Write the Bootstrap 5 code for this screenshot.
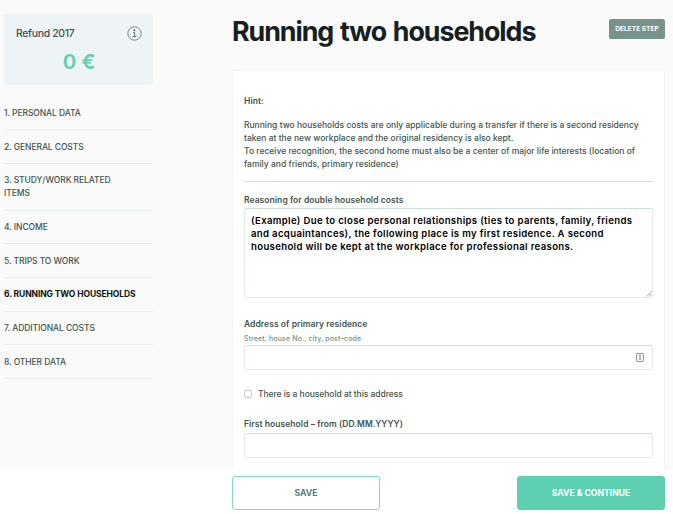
<!DOCTYPE html>
<html lang="en">
<head>
<meta charset="utf-8">
<meta name="viewport" content="width=device-width, initial-scale=1">
<title>Running two households</title>
<link href="https://cdn.jsdelivr.net/npm/bootstrap@5.3.0/dist/css/bootstrap.min.css" rel="stylesheet">
<style>
body{font-family:Inter,"Liberation Sans",sans-serif;font-size:8.5px;line-height:12.8px;color:#43544f;background:#fff;height:514px;overflow:hidden;font-weight:500}
.workspace{height:470px;background:#fafafa;overflow:hidden;padding:0 8px 0 4px}
.side{width:149px;padding-top:14px}
.refund{height:71px;background:#eef3f6;border-radius:3px;padding:12px 11px 0 12px}
.refund-title{font-size:10.4px;line-height:16px;letter-spacing:-.3px;color:#3f504b}
.amount{font-size:20.5px;line-height:24px;color:#5dd0b1;font-weight:600;padding-top:8px}
.steps{margin-top:11.8px}
.steps a{display:block;color:#43544f;text-decoration:none;font-size:8.5px;letter-spacing:-.08px;line-height:13px;padding:10.35px 30px 9.3px 0;border-bottom:1px solid #e6efed}
.steps a.current{color:#0c1513;font-weight:700;padding-right:0;letter-spacing:-.1px}
.main-col{width:433px}
.top-row{height:70px;padding-top:14px}
h1{font-size:26.8px;line-height:34px;font-weight:700;letter-spacing:-1.05px;word-spacing:1.5px;color:#17201e;margin:0}
.btn-delete{margin-top:5px;width:56px;height:20px;background:#76928b;color:#fff;font-size:6.6px;line-height:20px;font-weight:700;padding:0;border:0;border-radius:2px}
.panel{height:420px;background:#fff;border:1px solid #f0f4f4;padding:23.5px 11px 0 11px;border-radius:2px}
.hint-text{margin-top:12px;white-space:nowrap}
.rule{height:1px;background:#cfe3dc;margin:11px 0 11.5px}
.fl{display:block;font-weight:600;letter-spacing:.06px}
.form-control{border:1px solid #dfebe8;border-top-color:#cddfda;border-radius:3px;padding:0;font-size:8.5px}
.reason{height:90px;margin-top:1.5px;padding:6px 6px;font-size:9.6px;letter-spacing:.33px;line-height:12.8px;color:#000;font-weight:600;resize:none;white-space:pre;overflow:hidden}
.line-input{height:25px}
.addr-label{margin-top:20px}
.sub{font-size:7px;line-height:10px;color:#76928b;letter-spacing:.13px;padding-top:3px;height:13.6px}
.check-row{height:13px;margin-top:18px;gap:6px}
.from-label{margin-top:17px}
.from-input{margin-top:3px}
.check{width:8px;height:8px;border:1px solid #c3c9c7;border-radius:1.5px;margin:0;float:none}
.check-row label{letter-spacing:-.05px}
.grip{position:absolute;right:1px;bottom:1px}
.key{position:absolute;right:9px;top:8px}
.bottom-bar{height:44px;padding:6px 8px 4px 232px}
.btn-act{width:148px;height:34px;border-radius:3px;padding:0;font-size:8.6px;font-weight:700;line-height:32px}
.btn-save{border:1px solid #80dcc3;color:#4a7f72;background:#fff}
.btn-next{border:1px solid #5dd0b1;background:#5dd0b1;color:#fff}
</style>
<script src="https://cdn.jsdelivr.net/npm/bootstrap@5.3.0/dist/js/bootstrap.bundle.min.js" defer></script>
</head>
<body>
<div class="workspace d-flex justify-content-between">
  <aside class="side flex-shrink-0">
    <div class="refund">
      <div class="d-flex justify-content-between">
        <span class="refund-title">Refund 2017</span>
        <svg width="15" height="15" viewBox="0 0 15 15" fill="none" stroke="#61736d"><circle cx="7.5" cy="7.5" r="6.7" stroke-width=".8"/><path d="M6 6.3h1.6v4M5.8 10.5h3.6" stroke-width="1"/><circle cx="7.4" cy="4.2" r=".9" fill="#43544f" stroke="none"/></svg>
      </div>
      <div class="amount text-center">0 €</div>
    </div>
    <nav class="steps">
      <a href="#">1. PERSONAL DATA</a>
      <a href="#">2. GENERAL COSTS</a>
      <a href="#">3. STUDY/WORK RELATED ITEMS</a>
      <a href="#">4. INCOME</a>
      <a href="#">5. TRIPS TO WORK</a>
      <a href="#" class="current">6. RUNNING TWO HOUSEHOLDS</a>
      <a href="#">7. ADDITIONAL COSTS</a>
      <a href="#">8. OTHER DATA</a>
    </nav>
  </aside>
  <main class="main-col flex-shrink-0">
    <div class="top-row d-flex justify-content-between align-items-start">
      <h1>Running two households</h1>
      <button class="btn btn-delete">DELETE STEP</button>
    </div>
    <div class="panel">
      <div class="fl">Hint:</div>
      <div class="hint-text">Running two households costs are only applicable during a transfer if there is a second residency<br>taken at the new workplace and the original residency is also kept.<br>To receive recognition, the second home must also be a center of major life interests (location of<br>family and friends, primary residence)</div>
      <div class="rule"></div>
      <label class="fl" for="reason">Reasoning for double household costs</label>
      <div class="position-relative">
        <textarea id="reason" class="form-control reason">(Example) Due to close personal relationships (ties to parents, family, friends
and acquaintances), the following place is my first residence. A second
household will be kept at the workplace for professional reasons.</textarea>
        <svg class="grip" width="6" height="6" viewBox="0 0 6 6" stroke="#999" stroke-width=".7"><path d="M.5 5.5l5-5M3 5.5L5.5 3"/></svg>
      </div>
      <label class="fl addr-label" for="addr">Address of primary residence</label>
      <div class="sub">Street, house No., city, post–code</div>
      <div class="position-relative">
        <input id="addr" class="form-control line-input">
        <svg class="key" width="8" height="9" viewBox="0 0 8 9" fill="none" stroke="#8b8f8e"><rect x=".6" y=".6" width="6.8" height="7.8" rx=".6"/><path d="M4 2.4v4.2M3 2.6h2M3 6.4h2" stroke-width=".9"/></svg>
      </div>
      <div class="d-flex align-items-center check-row">
        <input id="hh" type="checkbox" class="form-check-input check"><label for="hh">There is a household at this address</label>
      </div>
      <label class="fl from-label" for="from">First household – from (DD.MM.YYYY)</label>
      <input id="from" class="form-control line-input from-input">
    </div>
  </main>
</div>
<footer class="bottom-bar d-flex justify-content-between">
  <button class="btn btn-act btn-save">SAVE</button>
  <button class="btn btn-act btn-next">SAVE &amp; CONTINUE</button>
</footer>
</body>
</html>
